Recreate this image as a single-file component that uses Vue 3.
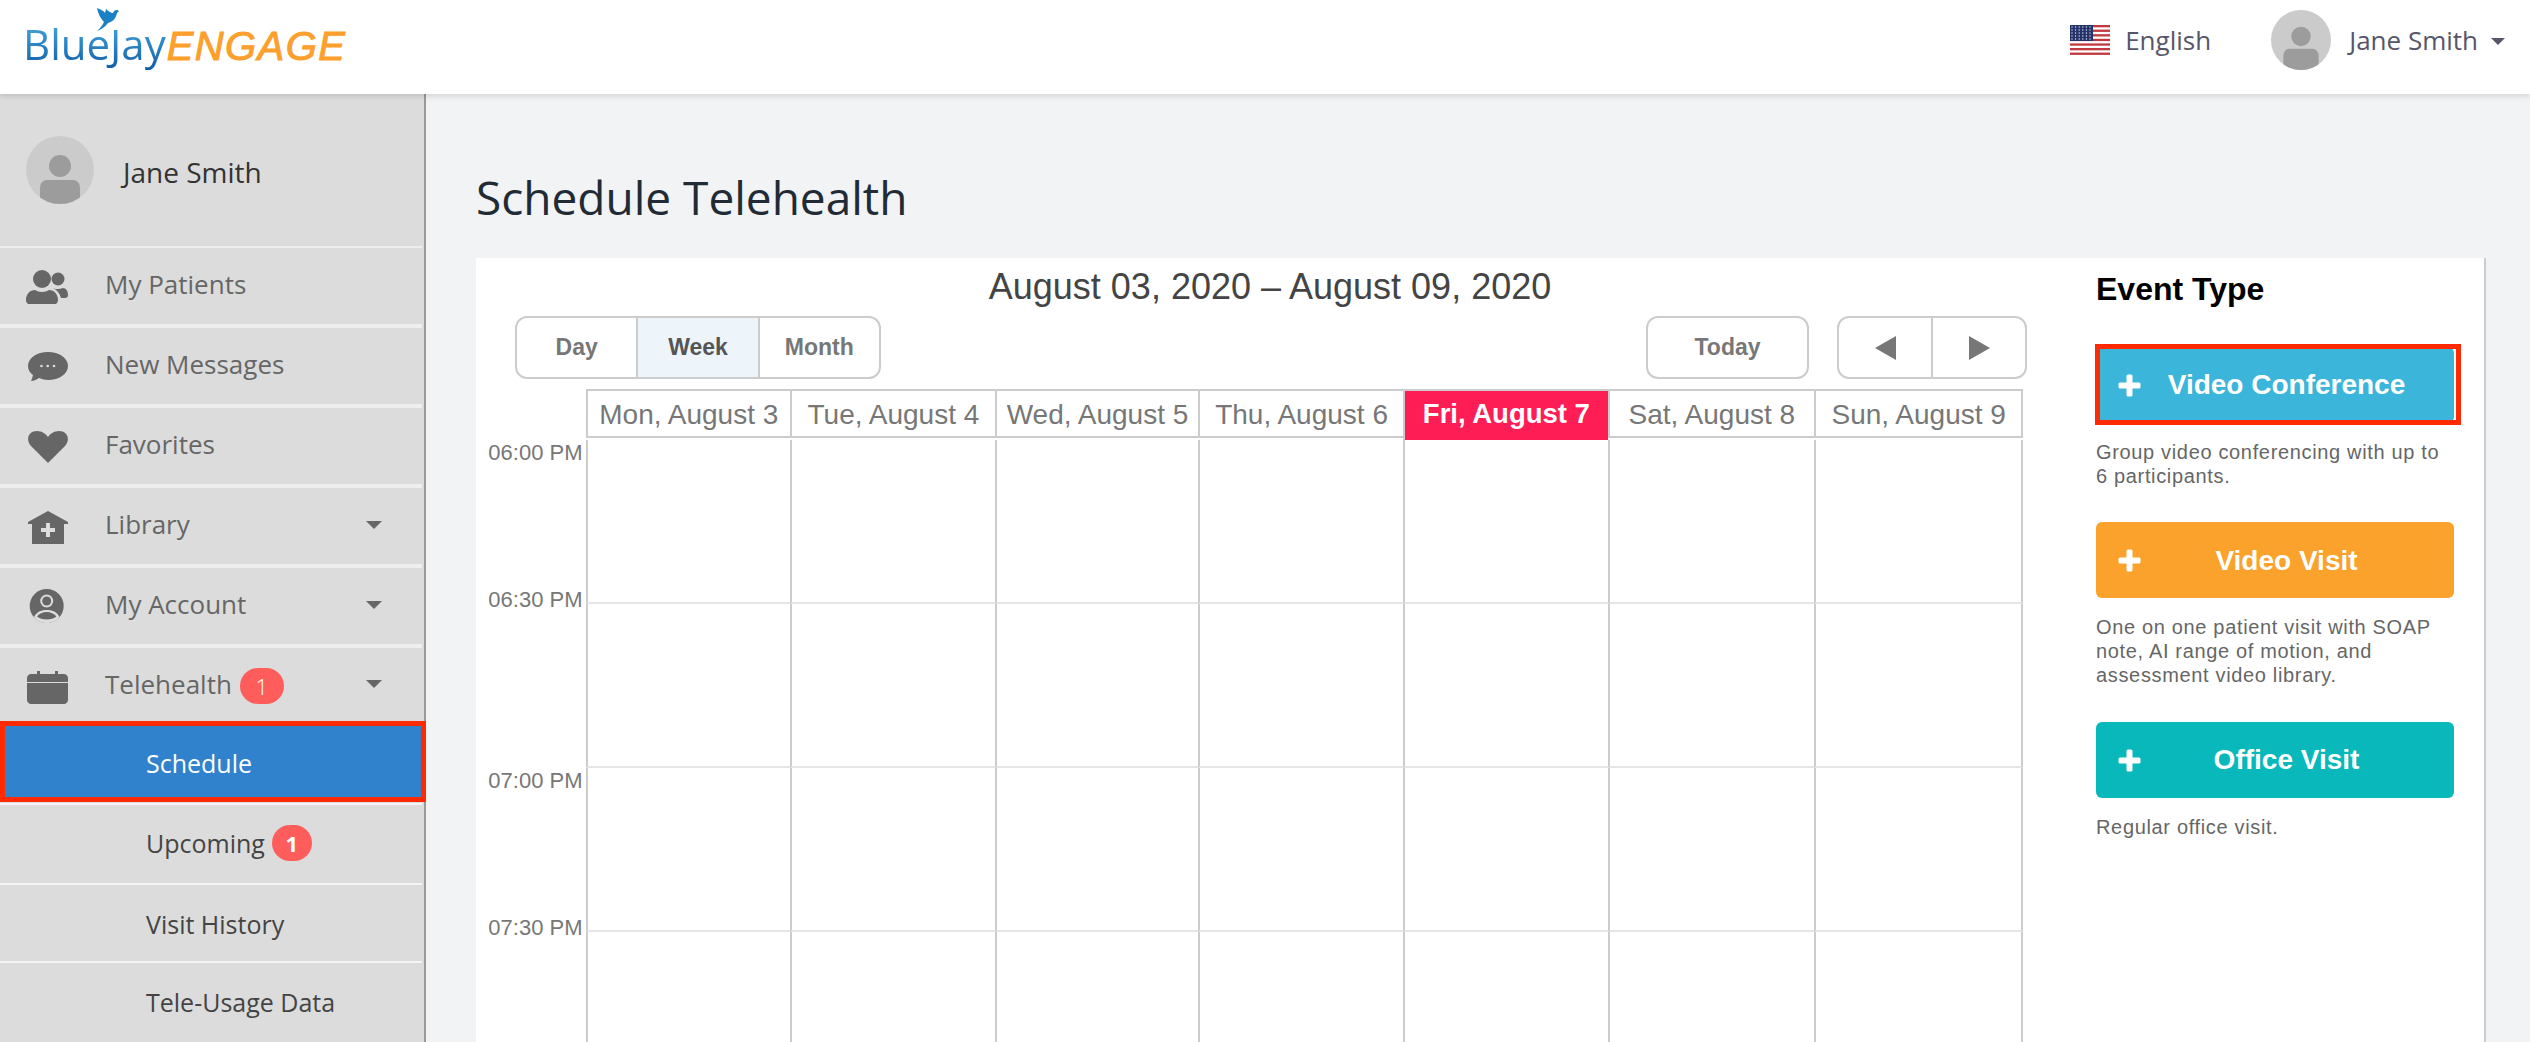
<template>
  <div class="app">
    <header class="topbar">
      <div class="logo">
        <svg class="bird" viewBox="0 0 24 26"><path d="M1 2C4 3 8 5 9 7L10 3C12 5 15 7 17 7C18 4 21 3 23 5L21 7C20 13 16 16 12 17C9 21 6 23 1 25C4 22 6 20 8 16C4 12 2 7 1 2Z" /></svg>
        <span class="logo-blue">BlueJay</span><span class="logo-orange">ENGAGE</span>
      </div>
      <div class="topbar-right">
        <svg class="flag" viewBox="0 0 40 30">
          <rect width="40" height="30" fill="#fff" />
          <rect v-for="n in 7" :key="n" x="0" :y="(n - 1) * 4.6" width="40" height="2.3" fill="#c0393f" />
          <rect width="23" height="16" fill="#26336b" />
          <template v-for="r in 5" :key="r">
            <circle v-for="c in 6" :key="c" :cx="c * 3.6 - 1.6" :cy="r * 3 - 1" r="0.7" fill="#d8dcec" />
          </template>
        </svg>
        <span class="lang">English</span>
        <svg class="avatar-top" viewBox="0 0 68 68">
          <defs><clipPath id="topclip"><circle cx="34" cy="34" r="34" /></clipPath></defs>
          <circle cx="34" cy="34" r="34" fill="#cbcbcb" />
          <circle cx="34" cy="30" r="11" fill="#9c9c9c" />
          <rect x="14" y="44" width="40" height="30" rx="7" fill="#9c9c9c" clip-path="url(#topclip)" />
        </svg>
        <span class="top-name">Jane Smith</span>
        <span class="caret top-caret"></span>
      </div>
    </header>

    <div class="body-row">
      <aside class="sidebar">
        <div class="profile">
          <svg class="avatar-side" viewBox="0 0 68 68">
            <defs><clipPath id="sideclip"><circle cx="34" cy="34" r="34" /></clipPath></defs>
            <circle cx="34" cy="34" r="34" fill="#cbcbcb" />
            <circle cx="34" cy="30" r="11" fill="#9c9c9c" />
            <rect x="14" y="44" width="40" height="30" rx="7" fill="#9c9c9c" clip-path="url(#sideclip)" />
          </svg>
          <span class="profile-name">Jane Smith</span>
        </div>

        <nav class="nav">
          <div class="nav-item">
            <svg class="nav-icon" viewBox="0 0 44 36">
              <circle cx="16" cy="11" r="9" />
              <path d="M0 32c0-6 4-10 9-10 2 1 4 2 7 2s5-1 7-2c5 0 9 4 9 10 0 2-1 4-3 4H3c-2 0-3-2-3-4z" />
              <circle cx="32" cy="11" r="6.5" />
              <path d="M27 20c2 1 3 1 5 1 3 0 4-1 5-1 3 0 5 3 5 7 0 2-1 3-3 3h-4c-1-4-4-8-8-10z" />
            </svg>
            <span class="label">My Patients</span>
          </div>
          <div class="nav-item">
            <svg class="nav-icon" viewBox="0 0 44 36">
              <path d="M22 4C11 4 2 10 2 18c0 4 2 7 5 9-.3 2-1 4-2 6 3 0 6-2 8-3 3 1 6 2 9 2 11 0 20-6 20-14S33 4 22 4z" />
              <circle cx="15.5" cy="18" r="1.3" fill="#ddd" />
              <circle cx="21.7" cy="18" r="1.3" fill="#ddd" />
              <circle cx="28" cy="18" r="1.3" fill="#ddd" />
            </svg>
            <span class="label">New Messages</span>
          </div>
          <div class="nav-item">
            <svg class="nav-icon" viewBox="0 0 44 36">
              <path d="M22 35 5 18C-1 11 3 3 11 3c5 0 9 3 11 6 2-3 6-6 11-6 8 0 12 8 6 15z" />
            </svg>
            <span class="label">Favorites</span>
          </div>
          <div class="nav-item">
            <svg class="nav-icon" viewBox="0 0 44 36">
              <path d="M22 3 42 14v2h-4v20H6V16H2v-2z" />
              <path d="M20 15h4v5h5v4h-5v5h-4v-5h-5v-4h5z" fill="#ddd" />
            </svg>
            <span class="label">Library</span>
            <span class="caret"></span>
          </div>
          <div class="nav-item">
            <svg class="nav-icon" viewBox="0 0 44 36">
              <circle cx="20.7" cy="18" r="17" />
              <circle cx="20.7" cy="13" r="6.500" fill="#ddd" />
              <path d="M8 29c3-6 8-7 12.700-7s10 1 12.700 7c-3 4-8 6-12.700 6S11 33 8 29z" fill="#ddd" />
              <circle cx="20.7" cy="13" r="4.500" />
              <path d="M11 28.500c2-3 6-4.500 9.700-4.500s7.700 1.500 9.700 4.500c-2 2-6 3-9.700 3s-7.700-1-9.700-3z" />
            </svg>
            <span class="label">My Account</span>
            <span class="caret"></span>
          </div>
          <div class="nav-item tele">
            <svg class="nav-icon" viewBox="0 0 44 36">
              <path d="M11 3h3v3h15V3h3v3h6c2 0 4 2 4 4v4H1v-4c0-2 2-4 4-4h6z" />
              <path d="M1 15h41v17c0 2-2 4-4 4H5c-2 0-4-2-4-4z" />
            </svg>
            <span class="label">Telehealth</span>
            <span class="badge badge-thin">1</span>
            <span class="caret"></span>
          </div>

          <div class="sub-item active"><span>Schedule</span></div>
          <div class="sub-item upcoming">
            <span>Upcoming</span>
            <span class="badge badge-bold">1</span>
          </div>
          <div class="sub-item history"><span>Visit History</span></div>
          <div class="sub-item last"><span>Tele-Usage Data</span></div>
        </nav>
      </aside>

      <main class="main">
        <h1>Schedule Telehealth</h1>
        <section class="card">
          <div class="calendar">
            <div class="cal-title">August 03, 2020 – August 09, 2020</div>
            <div class="toolbar">
              <div class="btn-group views">
                <button>Day</button>
                <button class="on">Week</button>
                <button>Month</button>
              </div>
              <button class="today">Today</button>
              <div class="btn-group arrows">
                <button><span class="tri left"></span></button>
                <button><span class="tri right"></span></button>
              </div>
            </div>

            <div class="head-row">
              <div></div>
              <div v-for="d in days" :key="d.label" class="head-cell" :class="{ now: d.today }">{{ d.label }}</div>
            </div>
            <div v-for="(row, i) in rows" :key="i" class="slot-row">
              <div class="times">
                <span v-for="t in row" :key="t">{{ t }}</span>
              </div>
              <div v-for="d in days" :key="d.label" class="slot"></div>
            </div>
          </div>

          <div class="events">
            <h2>Event Type</h2>
            <div v-for="e in events" :key="e.name" class="event">
              <button class="event-btn" :class="e.cls">
                <svg class="plus" viewBox="0 0 23 23"><path d="M8.500 2a1.500 1.500 0 0 1 1.500-1.500h3A1.500 1.500 0 0 1 14.500 2v6.500H21a1.500 1.500 0 0 1 1.500 1.500v3a1.500 1.500 0 0 1-1.500 1.500h-6.500V21a1.500 1.500 0 0 1-1.500 1.500h-3A1.500 1.500 0 0 1 8.500 21v-6.500H2A1.500 1.500 0 0 1 .5 13v-3A1.500 1.500 0 0 1 2 8.500h6.500z" /></svg>
                <span>{{ e.name }}</span>
                <i v-if="e.callout" class="callout"></i>
              </button>
              <p>{{ e.text }}</p>
            </div>
          </div>
        </section>
      </main>
    </div>
  </div>
</template>

<script setup>
const days = [
  { label: "Mon, August 3" },
  { label: "Tue, August 4" },
  { label: "Wed, August 5" },
  { label: "Thu, August 6" },
  { label: "Fri, August 7", today: true },
  { label: "Sat, August 8" },
  { label: "Sun, August 9" },
];

const rows = [["06:00 PM", "06:30 PM"], [], ["07:00 PM", "07:30 PM"], []];

const events = [
  {
    name: "Video Conference",
    cls: "blue",
    callout: true,
    text: "Group video conferencing with up to 6 participants.",
  },
  {
    name: "Video Visit",
    cls: "orange",
    text: "One on one patient visit with SOAP note, AI range of motion, and assessment video library.",
  },
  { name: "Office Visit", cls: "teal", text: "Regular office visit." },
];
</script>

<style>
body {
  margin: 0;
  overflow: hidden;
}
</style>

<style scoped>
.app {
  width: 2530px;
  height: 1042px;
  overflow: hidden;
  display: flex;
  flex-direction: column;
  font-family: "Open Sans", sans-serif;
  background: #f1f3f5;
}

.topbar {
  height: 94px;
  flex: none;
  background: #fff;
  display: flex;
  align-items: center;
  justify-content: space-between;
  padding: 0 25px 0 23px;
  box-shadow: 0 2px 6px rgba(0, 0, 0, 0.14);
  position: relative;
  z-index: 2;
}

.logo {
  position: relative;
  display: flex;
  align-items: baseline;
  margin-top: -6px;
}

.bird {
  position: absolute;
  left: 73px;
  top: -10px;
  width: 24px;
  height: 26px;
  fill: #1c80c4;
}

.logo-blue {
  font-size: 42px;
  line-height: 56px;
  background: linear-gradient(#4cb0e2, #0d5aa6);
  -webkit-background-clip: text;
  background-clip: text;
  color: transparent;
}

.logo-orange {
  font-family: "Liberation Sans", sans-serif;
  font-style: italic;
  font-size: 40px;
  letter-spacing: 1.4px;
  margin-left: 1px;
  color: #fc9f2c;
  -webkit-text-stroke: 1px #fc9f2c;
}

.topbar-right {
  display: flex;
  align-items: center;
  color: #56566a;
  font-size: 26px;
  margin-bottom: 14px;
}

.flag {
  width: 40px;
  height: 30px;
  margin-right: 15px;
}

.lang {
  margin-right: 60px;
}

.avatar-top {
  width: 60px;
  height: 60px;
  margin-right: 18px;
}

.top-name {
  margin-right: 13px;
}

.caret {
  margin-left: auto;
  margin-right: 40px;
  margin-top: -3px;
  width: 0;
  height: 0;
  border-left: 8px solid transparent;
  border-right: 8px solid transparent;
  border-top: 8px solid #666;
}

.top-caret {
  margin: 3px 0 0;
  border-left-width: 7px;
  border-right-width: 7px;
  border-top: 7px solid #56566a;
}

.body-row {
  flex: 1;
  min-height: 0;
  display: flex;
}

.sidebar {
  width: 426px;
  flex: none;
  box-sizing: border-box;
  background: #dcdcdc;
  border-right: 2px solid #999;
}

.profile {
  height: 154px;
  margin-right: 2px;
  box-sizing: border-box;
  border-bottom: 2px solid #eee;
  display: flex;
  align-items: center;
  padding-left: 26px;
  gap: 29px;
  font-size: 28px;
  color: #333;
}

.profile-name {
  margin-top: 3px;
}

.avatar-side {
  width: 68px;
  height: 68px;
}

.nav {
  padding-right: 2px;
}

.nav-item {
  height: 80px;
  box-sizing: border-box;
  border-bottom: 4px solid #eee;
  display: flex;
  align-items: center;
  padding-left: 26px;
  font-size: 26px;
  color: #666;
}

.nav-item.tele {
  height: 73px;
  border-bottom: 0;
  padding-top: 2px;
}

.label {
  margin-top: -4px;
}

.nav-icon {
  width: 44px;
  height: 36px;
  margin-right: 35px;
  fill: #666;
  filter: blur(0.4px);
}

.badge {
  height: 36px;
  border-radius: 18px;
  background: #ff5c5c;
  color: #fff;
  font-size: 22px;
  display: flex;
  align-items: center;
  justify-content: center;
}

.badge-thin {
  width: 44px;
  margin-left: 8px;
  font-weight: 300;
}

.badge-bold {
  width: 40px;
  margin-left: 7px;
  font-weight: 700;
}

.sub-item {
  height: 78px;
  box-sizing: border-box;
  border-bottom: 2px solid #f4f4f4;
  display: flex;
  align-items: center;
  padding-left: 146px;
  font-size: 25px;
  color: #444;
}

.sub-item.active {
  height: 81px;
  margin-right: -4px;
  margin-bottom: 1px;
  border: 5px solid #ff2a00;
  padding-left: 141px;
  padding-top: 2px;
  background: #3182cc;
  color: #fff;
  position: relative;
}

.sub-item.upcoming {
  height: 82px;
  border-top: 2px solid #f4f4f4;
  padding-bottom: 2px;
}

.sub-item.history {
  padding-top: 2px;
}

.sub-item.last {
  border-bottom: 0;
}

.main {
  flex: 1;
  min-width: 0;
  padding: 70px 44px 0 50px;
  overflow: hidden;
}

h1 {
  margin: 0 0 28px;
  font-size: 46px;
  line-height: 66px;
  font-weight: 400;
  color: #212b36;
}

.card {
  display: flex;
  background: #fff;
  border-right: 2px solid #ccc;
  height: 900px;
}

.calendar {
  width: 1588px;
  flex: none;
  box-sizing: border-box;
  padding: 0 37px 0 10px;
  font-family: "Liberation Sans", sans-serif;
}

.cal-title {
  text-align: center;
  font-size: 36px;
  line-height: 57px;
  margin: 0 -37px 1px -10px;
  color: #444;
}

.toolbar {
  display: flex;
  align-items: stretch;
  height: 63px;
  margin-left: 29px;
  margin-bottom: 10px;
}

button {
  font-family: inherit;
  border: 0;
  background: none;
  padding: 0;
  margin: 0;
}

.btn-group {
  display: flex;
  box-sizing: border-box;
  border: 2px solid #ccc;
  border-radius: 12px;
  overflow: hidden;
}

.btn-group button {
  flex: 1;
  display: flex;
  align-items: center;
  justify-content: center;
  font-size: 23px;
  font-weight: 700;
  color: #777;
}

.btn-group button + button {
  border-left: 2px solid #ccc;
}

.btn-group .on {
  background: #edf5fb;
  color: #555;
}

.views {
  width: 366px;
}

.today {
  margin-left: auto;
  width: 163px;
  box-sizing: border-box;
  border: 2px solid #ccc;
  border-radius: 12px;
  font-size: 23px;
  font-weight: 700;
  color: #777;
}

.arrows {
  width: 190px;
  margin-left: 28px;
}

.tri {
  width: 0;
  height: 0;
  border-top: 12px solid transparent;
  border-bottom: 12px solid transparent;
}

.tri.left {
  border-right: 21px solid #777;
}

.tri.right {
  border-left: 21px solid #777;
}

.head-row,
.slot-row {
  display: grid;
  grid-template-columns: 99.5px 204.6px 204.6px 203.6px 204.6px 205px 206px 209.6px;
}

.head-row {
  height: 51px;
  align-items: start;
}

.head-cell {
  height: 49px;
  box-sizing: border-box;
  border-top: 2px solid #ccc;
  border-bottom: 2px solid #ccc;
  border-left: 2px solid #ccc;
  font-size: 28px;
  line-height: 47px;
  text-align: center;
  white-space: nowrap;
  color: #777;
}

.head-cell:last-child {
  border-right: 2px solid #ccc;
}

.head-cell.now {
  height: 51px;
  background: #ff1d55;
  border-bottom: 0;
  border-top-color: #ccc;
  color: #fff;
  font-weight: 700;
  font-size: 27.500px;
  line-height: 45px;
}

.slot-row {
  height: 164px;
}

.times {
  display: flex;
  flex-direction: column;
  justify-content: space-between;
  align-items: flex-end;
  padding-right: 3px;
  font-size: 22px;
  line-height: 26px;
  color: #777;
}

.times span:first-child {
  margin-top: 0;
}

.times span:last-child {
  margin-bottom: -9px;
}

.slot {
  box-sizing: border-box;
  border-left: 2px solid #ccc;
  border-bottom: 2px solid #e5e5e5;
}

.slot:last-child {
  border-right: 2px solid #ccc;
}

.events {
  padding: 13px 0 0 32px;
  width: 358px;
  font-family: "Liberation Sans", sans-serif;
}

h2 {
  margin: 0 0 40px;
  font-size: 32px;
  line-height: 36px;
  color: #000;
}

.event-btn {
  position: relative;
  width: 358px;
  height: 76px;
  border-radius: 6px;
  display: flex;
  align-items: center;
  padding: 0 22px;
  box-sizing: border-box;
  color: #fff;
  font-size: 28px;
  font-weight: 700;
}

.event-btn span {
  flex: 1;
  text-align: center;
}

.plus {
  width: 23px;
  height: 23px;
  fill: #fff;
}

.blue {
  background: #3bb5da;
}

.orange {
  background: #faa22c;
}

.orange span {
  padding-top: 2px;
}

.teal {
  background: #09b8bb;
}

.callout {
  position: absolute;
  left: -1px;
  top: -3px;
  width: 366px;
  height: 81px;
  box-sizing: border-box;
  border: 5px solid #ff2a00;
}

.event p {
  margin: 17px 0 34px;
  font-size: 20px;
  line-height: 24px;
  letter-spacing: 0.66px;
  color: #666;
}

.event .orange + p {
  margin-bottom: 35px;
}
</style>
